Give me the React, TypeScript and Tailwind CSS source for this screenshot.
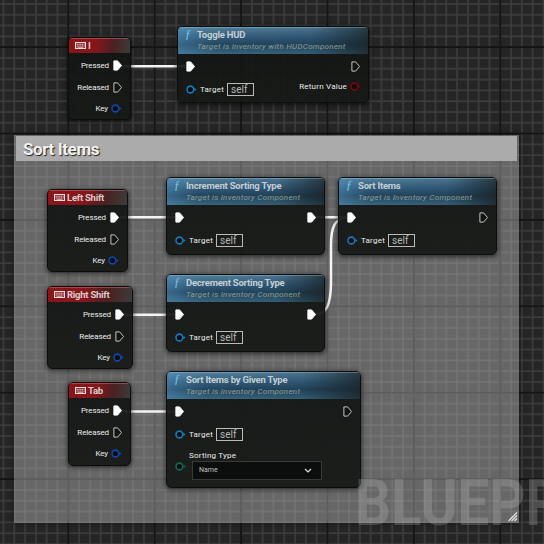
import React from "react";

const dark = "bg-[linear-gradient(180deg,rgba(17,20,18,0.93),rgba(23,25,23,0.94))]";
const shell =
  "absolute overflow-hidden rounded-[5px] border border-[#0b0e0e] shadow-[0_1px_4px_1px_rgba(0,0,0,0.55)] " + dark;

function Exec({ filled = false }: { filled?: boolean }) {
  return (
    <svg className="block h-[11px] w-[9px] shrink-0" viewBox="0 0 9 11">
      <path
        d="M0.9 0.9H4.6L8.5 5.5L4.6 10.1H0.9Z"
        fill={filled ? "#fff" : "#111411"}
        stroke={filled ? "#fff" : "#c4c4c4"}
        strokeWidth="1"
        strokeLinejoin="round"
      />
    </svg>
  );
}

function Pin({ color }: { color: string }) {
  return (
    <svg className="block h-[9px] w-[11px] shrink-0" viewBox="0 0 11 9">
      <circle cx="4.4" cy="4.5" r="3.4" fill="#080d12" stroke={color} strokeWidth="1.6" />
      <path d="M8.4 2.7L10.6 4.5L8.4 6.3Z" fill={color} />
    </svg>
  );
}

function Keyboard() {
  return (
    <svg className="block h-[7px] w-[11px] shrink-0" viewBox="0 0 11 7">
      <rect x="0.5" y="0.5" width="10" height="6" fill="#8d2a2e" stroke="#f1dede" />
      <path d="M1.6 2.3H9.6M1.6 4H9.6" stroke="#f1dede" strokeWidth="0.9" strokeDasharray="1.2 0.6" />
      <path d="M2.6 5.4H8.4" stroke="#f1dede" strokeWidth="0.7" />
    </svg>
  );
}

const keyLabel = "whitespace-nowrap text-[8px] leading-[10px] tracking-[-0.12px] text-[#ececec]";
const label = "whitespace-nowrap text-[8px] leading-[10px] tracking-[0.22px] text-[#ececec]";

function KeyNode({ title, place }: { title: string; place: string }) {
  return (
    <div className={shell + " " + place}>
      <div className="flex h-[15px] items-center gap-[2px] bg-[linear-gradient(100deg,#8c1519_0%,#84171b_45%,#4a2021_72%,#3c3d3a_100%)] pl-[6px] shadow-[inset_0_1px_0_rgba(255,150,150,0.35)]">
        <Keyboard />
        <span className="whitespace-nowrap pt-px text-[9.5px] font-bold leading-[14px] tracking-[-0.25px] text-[#dccbcb]">{title}</span>
      </div>
      <div className="flex h-[24px] items-center justify-end gap-[4px] pr-[8px]">
        <span className={keyLabel + " pt-px"}>Pressed</span>
        <Exec filled />
      </div>
      <div className="flex h-[21px] items-center justify-end gap-[4px] pr-[8px]">
        <span className={keyLabel}>Released</span>
        <Exec />
      </div>
      <div className="flex h-[21px] items-center justify-end gap-[3px] pr-[8px]">
        <span className={keyLabel}>Key</span>
        <Pin color="#0d48a8" />
      </div>
    </div>
  );
}

interface FnProps {
  title: string;
  sub: string;
  place: string;
  outFilled?: boolean;
  returns?: boolean;
  choice?: boolean;
}

function FunctionNode({ title, sub, place, outFilled, returns, choice }: FnProps) {
  return (
    <div className={shell + " " + place}>
      <div className="flex h-[27px] gap-[3px] bg-[linear-gradient(90deg,rgba(86,150,192,0.45)_0%,rgba(20,45,66,0)_20%,rgba(20,30,36,0.1)_70%,rgba(22,27,28,0.7)_100%),linear-gradient(180deg,#547f9b_0%,#305b7b_38%,#24455d_65%,#37657f_100%)] pl-[7px] pt-[2px] shadow-[inset_0_1px_0_rgba(160,210,235,0.35)]">
        <span className="w-[9px] font-['Liberation_Serif',serif] text-[12px] italic leading-[11px] text-[#78c6ee]">ƒ</span>
        <div className="flex flex-col">
          <span className="whitespace-nowrap text-[9.5px] font-bold leading-[12px] tracking-[-0.22px] text-[#c4ced2]">{title}</span>
          <span className="whitespace-nowrap text-[8px] italic leading-[11px] tracking-[0.29px] text-[#8b9e94]">{sub}</span>
        </div>
      </div>
      <div className="flex h-[24px] items-center justify-between pl-[8px] pr-[8px]">
        <Exec filled />
        <Exec filled={outFilled} />
      </div>
      <div className="flex h-[22px] items-center pl-[8px] pr-[7px]">
        <Pin color="#1479b8" />
        <span className={label + " ml-[3px] w-[27px] pt-px"}>Target</span>
        <span className="h-[13px] w-[27px] border border-[#b8bbb8] pl-[3px] text-[10px] leading-[12px] text-[#b5b8b5]">self</span>
        {returns && (
          <div className="mb-[5px] ml-auto flex items-center gap-[3px]">
            <span className={label}>Return Value</span>
            <Pin color="#7c0507" />
          </div>
        )}
      </div>
      {choice && (
        <div className="flex pl-[8px] pt-[6px]">
          <div className="pt-[11px]">
            <Pin color="#0e6a50" />
          </div>
          <div className="ml-[3px] flex flex-col">
            <span className={label}>Sorting Type</span>
            <div className="ml-[3px] flex h-[19px] w-[130px] items-center justify-between border border-[#383a38] bg-[#0c0e0d] pl-[6px] pr-[9px]">
              <span className="text-[7px] leading-[9px] text-[#c0c0c0]">Name</span>
              <svg className="h-[5px] w-[8px]" viewBox="0 0 8 5">
                <path d="M1 1L4 4L7 1" fill="none" stroke="#dedede" strokeWidth="1.2" />
              </svg>
            </div>
          </div>
        </div>
      )}
    </div>
  );
}

function Grid() {
  return (
    <svg className="absolute inset-0 h-[544px] w-[544px]">
      <defs>
        <pattern id="minor" x="67.3" y="46.1" width="10.8" height="10.8" patternUnits="userSpaceOnUse">
          <path d="M0 1H10.8M1 0V10.8" stroke="#3c3c3c" strokeWidth="1.7" />
        </pattern>
        <pattern id="major" x="67.3" y="46.1" width="86.4" height="86.4" patternUnits="userSpaceOnUse">
          <path d="M0 1H86.4M1 0V86.4" stroke="#141414" strokeWidth="2" />
        </pattern>
      </defs>
      <rect width="544" height="544" fill="#252525" />
      <rect width="544" height="544" fill="url(#minor)" />
      <rect width="544" height="544" fill="url(#major)" />
    </svg>
  );
}

function Wires() {
  return (
    <svg className="absolute inset-0 h-[544px] w-[544px]" fill="none" stroke="#f4f4f4" strokeWidth="2.5">
      <path d="M121 66.2H187M118 217.3H176M122 314.7H176M121 411.5H176M315 217.3H349" />
      <path d="M315 314.5C326 314 330.5 306 331 284L331 245C331 228 334 218 349 217.3" />
    </svg>
  );
}

export default function App() {
  return (
    <div className="relative h-[544px] w-[544px] overflow-hidden bg-[#252525] font-[Roboto,sans-serif]">
      <Grid />
      <div className="absolute left-[14px] top-[135px] h-[388px] w-[505px] bg-[rgba(180,180,180,0.46)] px-[2px] pt-px shadow-[0_0_4px_rgba(0,0,0,0.6)]">
        <div className="flex h-[25px] items-center bg-[#ababab] pl-[7px]">
          <span className="pt-px text-[17px] font-bold leading-[20px] tracking-[-0.4px] text-[#f1f1f1] [text-shadow:1px_1px_1px_#222]">Sort Items</span>
        </div>
      </div>
      <Wires />
      <KeyNode title="I" place="left-[68px] top-[37px] h-[83px] w-[63px]" />
      <KeyNode title="Left Shift" place="left-[47px] top-[189px] h-[83px] w-[81px]" />
      <KeyNode title="Right Shift" place="left-[47px] top-[286px] h-[83px] w-[86px]" />
      <KeyNode title="Tab" place="left-[68px] top-[382px] h-[84px] w-[63px]" />
      <FunctionNode title="Toggle HUD" sub="Target is Inventory with HUDComponent" returns place="left-[177px] top-[26px] h-[77px] w-[192px]" />
      <FunctionNode title="Increment Sorting Type" sub="Target is Inventory Component" outFilled place="left-[166px] top-[177px] h-[78px] w-[159px]" />
      <FunctionNode title="Sort Items" sub="Target is Inventory Component" place="left-[338px] top-[177px] h-[78px] w-[159px]" />
      <FunctionNode title="Decrement Sorting Type" sub="Target is Inventory Component" outFilled place="left-[166px] top-[274px] h-[78px] w-[159px]" />
      <FunctionNode title="Sort Items by Given Type" sub="Target is Inventory Component" choice place="left-[166px] top-[371px] h-[117px] w-[195px]" />
      <div className="absolute left-[355px] top-[466px] origin-left scale-x-[0.88] whitespace-nowrap text-[64px] font-bold leading-[75px] text-[rgba(190,190,190,0.26)]">
        BLUEPRINT
      </div>
      <svg className="absolute left-[508px] top-[512px] h-[10px] w-[10px]" viewBox="0 0 10 10">
        <path d="M0.5 9L9 0.5M3.5 9L9 3.5M6.5 9L9 6.5" stroke="#e8e8e8" strokeWidth="1.2" />
      </svg>
    </div>
  );
}
